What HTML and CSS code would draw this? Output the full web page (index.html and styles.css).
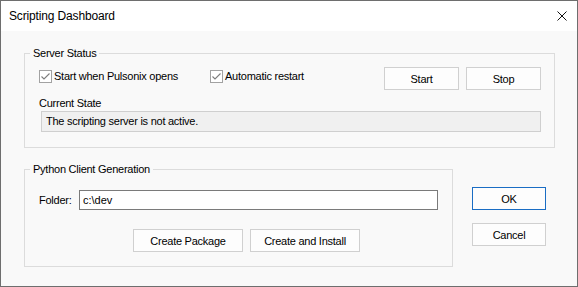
FILE: index.html
```
<!DOCTYPE html>
<html lang="en">
<head>
  <meta charset="UTF-8" />
  <meta name="viewport" content="width=device-width, initial-scale=1.0" />
  <title>Scripting Dashboard</title>
  <link rel="stylesheet" href="styles.css">
</head>
<body>
  <div class="window">
    <div class="titlebar">
      <span class="title">Scripting Dashboard</span>
      <span class="close">
        <svg width="10" height="10" viewBox="0 0 10 10"><path d="M0.5 0.5 L9.5 9.5 M9.5 0.5 L0.5 9.5" stroke="#111" stroke-width="1" fill="none"/></svg>
      </span>
    </div>

    <div class="content">
      <div class="group server">
        <div class="group-title">Server Status</div>
        <div class="status-row">
          <div class="checks">
            <label class="check first">
              <span class="box"><svg width="11" height="11" viewBox="0 0 11 11"><path d="M1.5 5.5 L4 8 L9.5 2.5" stroke="#7c7c7c" stroke-width="1.1" fill="none"/></svg></span>
              Start when Pulsonix opens
            </label>
            <label class="check">
              <span class="box"><svg width="11" height="11" viewBox="0 0 11 11"><path d="M1.5 5.5 L4 8 L9.5 2.5" stroke="#7c7c7c" stroke-width="1.1" fill="none"/></svg></span>
              Automatic restart
            </label>
          </div>
          <div class="actions">
            <button class="btn">Start</button>
            <button class="btn">Stop</button>
          </div>
        </div>
        <div class="field-label">Current State</div>
        <div class="state-box">The scripting server is not active.</div>
      </div>

      <div class="lower">
        <div class="group python">
          <div class="group-title">Python Client Generation</div>
          <div class="folder-row">
            <span class="folder-label">Folder:</span>
            <input class="folder-input" type="text" value="c:\dev" />
          </div>
          <div class="create-row">
            <button class="btn wide">Create Package</button>
            <button class="btn wide">Create and Install</button>
          </div>
        </div>
        <div class="dialog-buttons">
          <button class="btn dialog default">OK</button>
          <button class="btn dialog">Cancel</button>
        </div>
      </div>
    </div>
  </div>
</body>
</html>
```

FILE: styles.css
```
body {
  margin: 0;
  font-family: "Liberation Sans", Arial, sans-serif;
  font-size: 11px;
  letter-spacing: -0.25px;
  color: #000;
  background: #f9f9f9;
}
.window {
  width: 578px;
  height: 287px;
  box-sizing: border-box;
  border: 1px solid #6e6e6e;
  background: #f9f9f9;
  display: flex;
  flex-direction: column;
}
.titlebar {
  height: 30px;
  background: #fff;
  display: flex;
  align-items: center;
  justify-content: space-between;
  padding-left: 8px;
}
.title {
  font-size: 12px;
  letter-spacing: -0.15px;
  line-height: 30px;
}
.close {
  display: flex;
  margin-right: 10px;
}
.content {
  padding: 22px 0 0 23px;
}
.group {
  box-sizing: border-box;
  border: 1px solid #dcdcdc;
}
/* label sits on the top border of the group box */
.group-title {
  width: fit-content;
  margin: -8px 0 0 -9px;
  padding: 0 3px;
  line-height: 14px;
  background: #f9f9f9;
}
.server {
  width: 531px;
  padding: 0 13px 15px 14px;
}
.status-row {
  display: flex;
  justify-content: space-between;
  align-items: flex-start;
  padding-top: 7px;
}
.checks {
  display: flex;
  margin-top: 3px;
}
.check {
  display: flex;
  align-items: center;
  gap: 2px;
  height: 13px;
  line-height: 13px;
}
.check.first {
  width: 171px;
}
.box {
  width: 13px;
  height: 13px;
  box-sizing: border-box;
  border: 1px solid #a2a2a2;
  background: #fff;
  display: flex;
  align-items: center;
  justify-content: center;
}
.actions {
  display: flex;
  gap: 7px;
}
.btn {
  box-sizing: border-box;
  width: 75px;
  height: 23px;
  padding: 0;
  border: 1px solid #d0d0d0;
  background: #fdfdfd;
  font-family: inherit;
  font-size: 11px;
  letter-spacing: -0.25px;
  color: #000;
}
.btn.wide {
  width: 110px;
}
.btn.dialog {
  width: 74px;
}
.btn.default {
  border-color: #1a6dc4;
}
.field-label {
  margin-top: 6px;
  line-height: 14px;
}
.state-box {
  margin: 1px 0 0 2px;
  height: 21px;
  box-sizing: border-box;
  border: 1px solid #cfcfcf;
  background: #f0f0f0;
  padding: 0 4px;
  line-height: 19px;
}
.lower {
  display: flex;
  align-items: flex-start;
  margin-top: 21px;
}
.python {
  width: 429px;
  padding: 0 14px 14px 14px;
}
.folder-row {
  display: flex;
  align-items: center;
  margin-top: 14px;
  height: 20px;
}
.folder-label {
  width: 40px;
  flex: none;
}
.folder-input {
  box-sizing: border-box;
  width: 359px;
  height: 20px;
  margin: 0;
  border: 1px solid #7a7a7a;
  padding: 0 3px;
  background: #fff;
  font-family: inherit;
  font-size: 11px;
  color: #000;
  outline: none;
}
.create-row {
  display: flex;
  gap: 7px;
  margin-top: 19px;
  padding-left: 94px;
}
.dialog-buttons {
  display: flex;
  flex-direction: column;
  gap: 13px;
  margin-left: 19px;
  padding-top: 18px;
}
```
